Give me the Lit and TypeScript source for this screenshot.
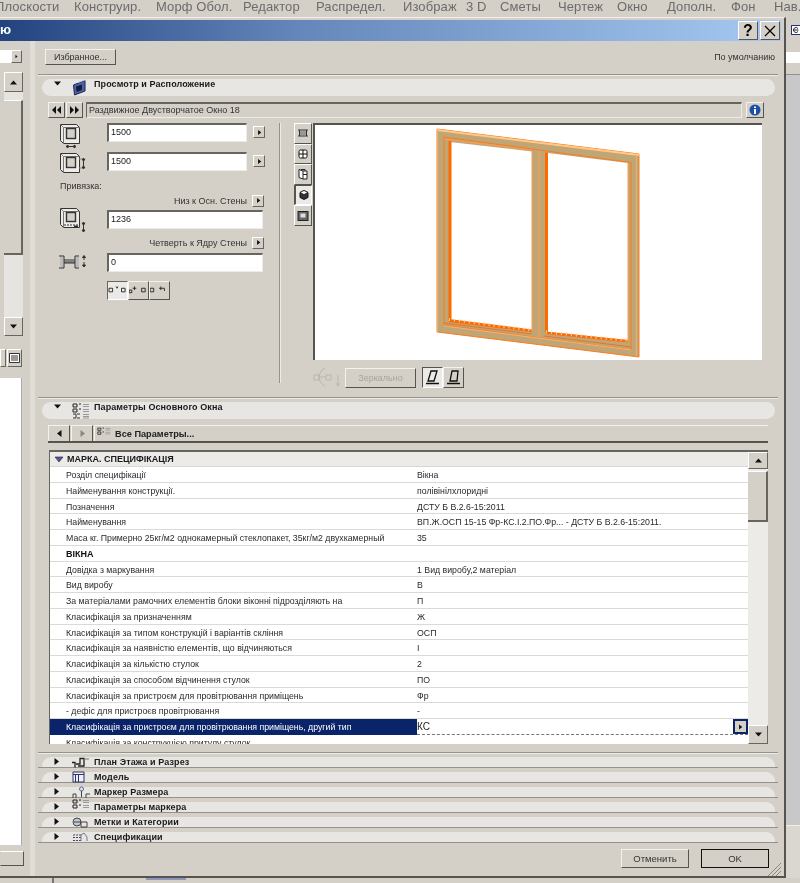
import { LitElement, html, css, svg } from "lit";
import { customElement } from "lit/decorators.js";

const MENU = ["Плоскости", "Конструир.", "Морф Обол.", "Редактор", "Распредел.", "Изображ", "3 D", "Сметы", "Чертеж", "Окно", "Дополн.", "Фон", "Нав."];

const ROWS: [string, string][] = [
  ["Розділ специфікації", "Вікна"],
  ["Найменування конструкції.", "полівінілхлоридні"],
  ["Позначення", "ДСТУ Б В.2.6-15:2011"],
  ["Найменування", "ВП.Ж.ОСП 15-15 Фр-КС.І.2.ПО.Фр... - ДСТУ Б В.2.6-15:2011."],
  ["Маса кг. Примерно 25кг/м2 однокамерный стеклопакет, 35кг/м2 двухкамерный", "35"],
  ["ВІКНА", ""],
  ["Довідка з маркування", "1 Вид виробу,2 матеріал"],
  ["Вид виробу", "В"],
  ["За матеріалами рамочних елементів блоки віконні підрозділяють на", "П"],
  ["Класифікація за призначенням", "Ж"],
  ["Класифікація за типом конструкцій і варіантів скління", "ОСП"],
  ["Класифікація за наявністю елементів, що відчиняються", "І"],
  ["Класифікація за кількістю стулок", "2"],
  ["Класифікація за способом відчинення стулок", "ПО"],
  ["Класифікація за пристроєм для провітрювання приміщень", "Фр"],
  ["- дефіс для пристроєв провітрювання", "-"],
];

const ink = "#333";

// arrows
const tri = (d: string, w = 7, h = 7, fill = "#111") => svg`<svg width=${w} height=${h} viewBox="0 0 7 7"><path d=${d} fill=${fill}/></svg>`;
const triR = tri("M1.5 0L6 3.5L1.5 7Z");
const triL = tri("M5.5 0L1 3.5L5.5 7Z");
const triU = tri("M0 5.5L3.5 1.5L7 5.5Z", 9, 7);
const triD = tri("M0 1.5L3.5 5.5L7 1.5Z", 9, 7);

// window-in-wall box used next to the size fields
const boxIcon = (arrow: "h" | "v" | "a") => svg`<svg class="fi ${arrow}" width="28" height="26" viewBox="0 0 28 26" fill="none" stroke=${ink}>
  <path d="M1.5 1.5H17.5L20.5 4.5V20.5H4.5L1.5 17.5Z" fill="#eeece8"/>
  <path d="M4.5 20.5V4.5H20.5M1.5 1.5L4.5 4.5" stroke="#777"/>
  <rect x="7.5" y="5.5" width="9" height="${arrow === "a" ? 9 : 10}" fill="#d4d0c8" stroke-width="1.4"/>
  ${arrow === "h" ? svg`<path d="M7 23.5H17M7 23.5l2-1.5v3zM17 23.5l-2-1.5v3z" fill="#222"/>` : svg``}
  ${arrow === "v" ? svg`<path d="M24.5 6V17M24.5 6l-1.5 2h3zM24.5 17l-1.5-2h3z" fill="#222"/><path d="M20 7h3M20 16h3" stroke="#888"/>` : svg``}
  ${arrow === "a" ? svg`<path d="M24.5 15V25M24.5 15l-1.5 2h3zM24.5 25l-1.5-2h3z" fill="#222"/><path d="M5 18H20" stroke-dasharray="2 1"/><path d="M15 19h4l-2 2z" fill="#222"/>` : svg``}
</svg>`;

const jambIcon = svg`<svg class="fi" width="28" height="18" viewBox="0 0 28 18" fill="none" stroke=${ink}>
  <path d="M0 3h5v12H0M5 9h11M16 3v12M16 3h4M16 15h4" />
  <path d="M1 4h3v10H1zM17 4h3v10h-3z" fill="#bbb" stroke="none"/>
  <path d="M5 7h11M5 10h11"/>
  <path d="M25 3v4M25 9v5M23.5 4.5L25 2.5l1.5 2zM23.5 12L25 14l1.5-2z" fill="#222"/>
</svg>`;

const anchor = (a: string) => svg`<svg width="19" height="17" viewBox="0 0 21 19" fill="none" stroke="#222">${svg`<path d=${a}/>`}</svg>`;

const tabIcons = [
  svg`<path d="M1 3h10M1 9h10M2.5 3v6M9.5 3v6" stroke="#333" fill="none"/><path d="M3 4h6v4H3z" fill="#999"/>`,
  svg`<rect x="2" y="2" width="8" height="8" rx="1.5" fill="#fff" stroke="#111"/><path d="M6 2v8M2 6h8" stroke="#111"/>`,
  svg`<path d="M2 1.5L6 3v8L2 9.5zM6 3h4v8H6M8 3V1.5H4" fill="#fff" stroke="#222"/><path d="M6 6.5h4"  stroke="#222"/>`,
  svg`<path d="M6 1.5L10 3.5V8.5L6 10.5L2 8.5V3.500Z" fill="#333" stroke="#111"/><path d="M2 3.500L6 5.500L10 3.500L6 1.500Z" fill="#fff" stroke="#111" stroke-width=".7"/>`,
  svg`<rect x="1" y="1.500" width="10" height="9" fill="#666" stroke="#222"/><rect x="3.500" y="3.500" width="5" height="4" fill="#ddd"/>`,
];

const sectionIcon = (kind: string) => {
  switch (kind) {
    case "view":
      return svg`<svg width="15" height="17" viewBox="0 0 15 17"><path d="M1.500 6L13 1.500V12L2.500 16Z" fill="#4a62a8" stroke="#1c2450"/><path d="M4 7.500L10 5.500V11L4.500 13Z" fill="#161c3a"/><path d="M6 3.500L13 1" stroke="#b9c4e8"/></svg>`;
    case "param":
    case "marker":
      return svg`<svg width="18" height="16" viewBox="0 0 18 16" fill="none"><path d="M1 1h4v3H1zM1 6h4v3H1zM7 1h2M7 6h2" stroke="#222"/><path d="M11 1.500h6M11 3.500h6M11 6.500h6M11 8.500h6" stroke="#999"/>${kind === "param" ? svg`<path d="M1 11h3v4H1M5 11h3M5 15h3" stroke="#333"/><path d="M11 11.500h6M11 13.500h6M11 15h6" stroke="#999"/>` : svg``}</svg>`;
    case "plan":
      return svg`<svg width="17" height="11" viewBox="0 0 17 11" fill="none" stroke="#222"><path d="M0 5.500h3v5M4 7h4V1.500h4V9H6" stroke-width="1.300"/><path d="M12 2h5" stroke="#777"/></svg>`;
    case "model":
      return svg`<svg width="13" height="12" viewBox="0 0 13 12" fill="#eef" stroke="#2a3560"><path d="M1 1h11v10H1z"/><path d="M1 3.500h11M6.500 3.500V11M3.500 3.500V11" fill="none"/></svg>`;
    case "dim":
      return svg`<svg width="19" height="13" viewBox="0 0 19 13" fill="none" stroke="#444"><circle cx="9.500" cy="3" r="2" stroke="#5566aa"/><path d="M9.500 5v6M1 8h3M1 8v4M4 8v4M14 8h4M14 8v4" /></svg>`;
    case "label":
      return svg`<svg width="16" height="11" viewBox="0 0 16 11" fill="none" stroke="#444"><circle cx="5" cy="5" r="4" fill="#c4c8d4"/><path d="M9 5h6v5H9zM2 5h7"/></svg>`;
    default:
      return svg`<svg width="16" height="10" viewBox="0 0 16 10" fill="none" stroke="#445"><path d="M1 3h9M1 5.500h9M1 8.500h9" stroke-dasharray="2 1"/><path d="M9 9V3l3-2 3 4v4" stroke="#778"/></svg>`;
  }
};

// 3D preview of the two-part window
const windowDrawing = svg`<svg class="drawing" width="447" height="235" viewBox="315 125 447 235">
  <path d="M437 129L639 154V357L437 332Z" fill="#bfa674" stroke="#ff7a1a"/>
  <path d="M437 129L639 154L639 156L437 131Z" fill="#ffc98a"/>
  <path d="M444 137L631 162.500V350L444 325Z" fill="none" stroke="#ff7a1a"/>
  <path d="M444 139L531 150" stroke="#ff9a50"/>
  <path d="M437.500 130V332M636.500 155V356" stroke="#e9b070"/>
  <path d="M450 142L532 151.500V330.500L450 320Z" fill="#fff"/>
  <path d="M548 153L628 163V340L548 332Z" fill="#fff"/>
  <path d="M448.500 141H451.500V320H448.500Z" fill="#ff6a00"/>
  <path d="M545 152.500H548V333H545Z" fill="#ff6a00"/>
  <path d="M449 319L532 329.500V332L449 322Z" fill="#ff6a00"/>
  <path d="M546 331.500L628 340V342.500L546 334Z" fill="#ff6a00"/>
  <path d="M449 319.500L532 330M546 332L628 340.500" stroke="#ffd0a0" stroke-dasharray="1 4" stroke-width="3" fill="none"/>
  <path d="M532 151V331M539 151V338M628 163V342" stroke="#ff9a50" fill="none"/>
  <path d="M444 326L631 350" stroke="#ffae70"/>
  <path d="M444 323L532 334M544 336L631 347" stroke="#e8732a"/>
</svg>`;

@customElement("app-root")
export class AppRoot extends LitElement {
  static styles = css`
    :host {
      display: block;
      width: 800px;
      height: 883px;
      overflow: hidden;
      background: #d4d0c8;
      color: #333;
      font-family: "Liberation Sans", Arial, sans-serif;
      font-size: 9px;
      filter: blur(0.3px);
    }
    * { box-sizing: border-box; }

    .menu {
      height: 17px;
      display: grid;
      grid-template-columns: 74px 82px 87px 73px 87px 63px 34px 58px 59px 50px 64px 43px 40px;
      font-size: 13px;
      letter-spacing: 0.1px;
      line-height: 13px;
      color: #6c6c6c;
      white-space: nowrap;
      overflow: hidden;
    }
    .menu span:first-child { margin-left: -5px; }

    .desk { display: flex; height: 861px; }
    .dialog {
      width: 786px;
      flex: none;
      border-top: 1px solid #f2f0ec;
      border-right: 2px solid #55544f;
      border-bottom: 2px solid #55544f;
      display: flex;
      flex-direction: column;
    }
    .title {
      height: 21px;
      margin: 2px 3px 0 0;
      flex: none;
      background: linear-gradient(90deg, #23437f 0%, #6486ba 38%, #a6caf2 100%);
      color: #fff;
      font-size: 13px;
      font-weight: bold;
      line-height: 20px;
      display: flex;
      justify-content: space-between;
    }
    .caps { display: flex; gap: 2px; padding: 1px 1px 1px 0; }
    .cap {
      width: 20px;
      background: #d4d0c8;
      border: 1px solid;
      border-color: #fff #555 #555 #fff;
      display: flex;
      align-items: center;
      justify-content: center;
      color: #000;
      font-size: 16px;
      line-height: 1;
    }
    .body { flex: 1; display: flex; min-height: 0; }

    /* left strip of the window behind */
    .side { width: 30px; flex: none; display: flex; flex-direction: column; }
    .side-field { display: flex; height: 13px; margin-top: 9px; width: 22px; }
    .side-field i { width: 11px; background: #fff; }
    .side-field b {
      width: 11px;
      border: 1px solid;
      border-color: #fff #666 #666 #fff;
      display: flex;
      align-items: center;
      justify-content: center;
    }
    .side-scroll {
      margin: 9px 0 0 4px;
      width: 19px;
      height: 264px;
      background: #e6e4e0;
      display: flex;
      flex-direction: column;
    }
    .side-thumb {
      height: 155px;
      margin: 8px 0 62px;
      background: #d4d0c8;
      border-right: 2px solid #66655f;
      border-bottom: 2px solid #66655f;
      border-top: 1px solid #fff;
      flex: none;
    }
    .sbtn {
      background: #d4d0c8;
      border: 1px solid;
      border-color: #fff #66655f #66655f #fff;
      display: flex;
      align-items: center;
      justify-content: center;
      flex: none;
    }
    .h20 { height: 20px; }
    .h19 { height: 19px; }
    .side-tools { display: flex; justify-content: flex-end; width: 22px; margin-top: 13px; gap: 1px; height: 18px; }
    .side-tools .list { width: 15px; }
    .side-tools .stub { width: 6px; }
    .side-list { margin-top: 11px; width: 22px; height: 467px; background: #fff; border-right: 1px solid #aaa; }
    .side-foot { margin-top: 6px; width: 24px; height: 15px; border: 1px solid; border-color: #fff #55544f #55544f #d4d0c8; }
    .split { width: 6px; flex: none; background: #e0ddd7; border-right: 1px solid #d4d0c8; }

    .main { flex: 1; min-width: 0; display: flex; flex-direction: column; position: relative; }
    .favs {
      height: 33px;
      flex: none;
      padding: 8px 8px 0 9px;
      display: flex;
      justify-content: space-between;
    }
    .btn {
      background: #d4d0c8;
      border: 1px solid;
      border-color: #f4f2ee #55544f #55544f #f4f2ee;
      display: flex;
      align-items: center;
      justify-content: center;
    }
    .favs .btn { width: 71px; height: 16px; }
    .favs span { padding-top: 3px; margin-right: 1px; }

    .sep {
      flex: none;
      height: 2px;
      margin: 0 6px 0 2px;
      border-top: 1px solid #94928c;
      border-bottom: 1px solid #ecebe6;
    }
    .pill {
      flex: none;
      height: 17px;
      margin: 3px 9px 0 6px;
      background: #e8e6e2;
      border-radius: 9px;
      display: grid;
      grid-template-columns: 19px 22px 1fr;
      align-items: center;
      font-weight: bold;
      color: #1a1a1a;
      padding-left: 11px;
      letter-spacing: 0.08px;
    }
    .pill .lift { padding-bottom: 6px; line-height: 11px; }
    .pill .ic { display: flex; align-items: center; height: 100%; }

    .nav { flex: none; display: flex; margin: 6px 0 0 12px; height: 16px; gap: 1px; }
    .nav .btn { width: 17px; }
    .nav .field {
      margin-left: 2px;
      width: 656px;
      background: #d4d0c8;
      border-top: 2px solid #66655f;
      border-left: 1px solid #66655f;
      border-right: 1px solid #ecebe6;
      border-bottom: 1px solid #ecebe6;
      padding-left: 2px;
      line-height: 12px;
    }
    .nav .info { margin-left: 3px; width: 18px; }

    .stage { flex: none; display: flex; height: 266px; margin-top: 5px; }
    .form { width: 243px; flex: none; margin-left: 12px; }
    .row { display: flex; align-items: flex-start; height: 19px; }
    .row .fi { width: 28px; flex: none; margin-left: 11px; }
    .row .fi.a { margin-top: -3px; }
    .input {
      height: 19px;
      background: #fff;
      border-top: 2px solid #66655f;
      border-left: 2px solid #66655f;
      border-right: 1px solid #ecebe6;
      border-bottom: 1px solid #ecebe6;
      padding-left: 2px;
      line-height: 15px;
      color: #222;
      flex: none;
    }
    .i-s { width: 140px; margin-left: 20px; }
    .i-l { width: 156px; margin-left: 20px; }
    .mini {
      width: 12px;
      height: 12px;
      margin: 3px 0 0 6px;
      background: #d4d0c8;
      border: 1px solid;
      border-color: #fff #66655f #66655f #fff;
      display: flex;
      align-items: center;
      justify-content: center;
      flex: none;
    }
    .mini svg { width: 5px; height: 5px; }
    .r2 { margin-top: 10px; }
    .caption { margin: 10px 0 0 12px; line-height: 11px; }
    .ref {
      display: flex;
      justify-content: flex-end;
      align-items: center;
      width: 216px;
      height: 13px;
    }
    .ref .mini { margin: 0 0 0 5px; }
    .ref.a { margin-top: 2px; }
    .ref.b { margin-top: 7px; }
    .r3 { margin-top: 3px; }
    .r4 { margin-top: 4px; }
    .anchors { display: flex; margin: 9px 0 0 59px; }
    .anchors .btn { width: 21px; height: 19px; }
    .anchors .on { background: #eceae6; border-color: #66655f #fff #fff #66655f; }
    .vline {
      width: 2px;
      flex: none;
      height: 260px;
      margin-left: -12px;
      border-left: 1px solid #94928c;
      border-right: 1px solid #ecebe6;
    }
    .tabs { flex: none; width: 18px; margin: 0 0 0 13px; display: flex; flex-direction: column; }
    .tab {
      height: 20.600px;
      background: #d4d0c8;
      border: 1px solid;
      border-color: #fff #55544f #55544f #fff;
      display: flex;
      align-items: center;
      justify-content: center;
    }
    .tab.on { background: #eceae6; border-color: #55544f #fff #fff #55544f; border-width: 1px 1px 1px 2px; }
    .right { margin-left: 1px; width: 449px; flex: none; }
    .preview {
      height: 237px;
      background: #fff;
      border-top: 2px solid #55544f;
      border-left: 2px solid #55544f;
      overflow: hidden;
    }
    .drawing { display: block; }
    .mirror { display: flex; align-items: flex-start; margin-top: 6px; }
    .mirror .fl { width: 28px; flex: none; }
    .mirror .btn.dis { width: 71px; height: 20px; margin: 2px 0 0 4px; color: #a6a49e; }
    .mirror .tog { width: 21px; height: 21px; margin-top: 1px; }
    .mirror .tog.first { margin-left: 6px; background: #eceae6; border-color: #55544f #fff #fff #55544f; }

    .params-top { margin-top: 8px; }
    .bar {
      flex: none;
      display: flex;
      height: 18px;
      margin: 6px 16px 0 12px;
      border-bottom: 2px solid #55544f;
      gap: 1px;
    }
    .bar .btn { width: 22px; height: 16px; border-bottom: 0; }
    .bar .all {
      flex: 1;
      justify-content: flex-start;
      font-weight: bold;
      font-size: 9.2px;
      color: #222;
      gap: 4px;
      padding-left: 2px;
      border-right: 0;
    }
    .bar .all svg { width: 14px; height: 13px; }
    .panel {
      flex: none;
      margin: 7px 16px 0 13px;
      height: 294px;
      display: flex;
      border-top: 2px solid #66655f;
      border-left: 1px solid #66655f;
      background: #fff;
      overflow: hidden;
    }
    .table { flex: 1; min-width: 0; overflow: hidden; font-size: 8.75px; color: #2a2a2a; }
    .thead {
      height: 15px;
      background: #ecebe8;
      border-bottom: 1px solid #d9d7d1;
      font-weight: bold;
      font-size: 9px;
      color: #1a1a1a;
      display: flex;
      align-items: center;
      gap: 3px;
      padding-left: 4px;
      line-height: 12px;
    }
    .tr {
      height: 15.780px;
      display: grid;
      grid-template-columns: 367px 1fr;
      border-bottom: 1px solid #dcdad4;
      line-height: 17px;
      white-space: nowrap;
    }
    .tr > div { padding-left: 16px; overflow: hidden; }
    .tr > div + div { padding-left: 0; }
    .tr.group > div { font-weight: bold; color: #111; font-size: 9px; }
    .tr.sel { border-bottom: 0; position: relative; line-height: 16px; }
    .tr.sel > div:first-child { background: #0a246a; color: #fff; }
    .tr.sel > div + div {
      font-size: 10px;
      border-bottom: 1px dashed #777;
      color: #222;
    }
    .tr.sel .pick {
      position: absolute;
      right: 0;
      top: 0;
      width: 15px;
      height: 15px;
      padding: 0;
      border: 2px solid #0a246a;
      background: #d4d0c8;
      display: flex;
      align-items: center;
      justify-content: center;
    }
    .pick svg { width: 5px; height: 6px; }
    .tr.cut { border-bottom: 0; }
    .vscroll {
      width: 20px;
      flex: none;
      background: #ecebe8;
      display: flex;
      flex-direction: column;
    }
    .vscroll .up { height: 17px; }
    .vscroll .thumb {
      height: 51px;
      margin-top: 2px;
      flex: none;
      background: #d4d0c8;
      border-right: 2px solid #66655f;
      border-bottom: 2px solid #66655f;
      border-top: 1px solid #fff;
    }
    .vscroll .dn { height: 19px; margin-top: 203px; }

    .closed-first { margin-top: 8px; margin-bottom: -1px; }
    .closed { flex: none; height: 15px; margin: 0 6px 0 2px; border-bottom: 1px solid #94928c; padding: 4px 3px 0 4px; }
    .closed .cap-pill {
      height: 10px;
      background: #e8e6e2;
      border-radius: 9px 9px 0 0;
      display: grid;
      grid-template-columns: 19px 22px 1fr;
      align-items: center;
      padding-left: 11px;
      font-weight: bold;
      color: #1a1a1a;
      line-height: 10px;
      letter-spacing: 0.1px;
    }
    .closed .ic { display: flex; align-items: center; height: 10px; }

    .foot { flex: none; display: flex; justify-content: flex-end; gap: 12px; margin-top: 6px; padding-right: 15px; position: relative; }
    .foot .btn { width: 68px; height: 19px; font-size: 9.500px; }
    .foot .ok { outline: 1px solid #111; outline-offset: -1px; }
    .grip { position: absolute; right: 2px; bottom: -9px; }

    .strip { flex: 1; display: flex; flex-direction: column; }
    .strip .a { height: 24px; padding: 8px 0 0 5px; overflow: hidden; }
    .strip .b { height: 11px; background: #fff; margin-top: 11px; }
    .strip .c { height: 12px; border-bottom: 1px solid #94928c; }
    .strip .d { height: 751px; background: #c8c8c8; border-bottom: 1px solid #f0eee9; }
    .strip .e { flex: 1; background: #dad7d1; }

    .status { height: 5px; position: relative; overflow: hidden; }
    .status i { position: absolute; left: 52px; top: 0; width: 2px; height: 5px; background: #777; }
    .status b { position: absolute; left: 146px; top: 0; width: 40px; height: 2px; background: #8e96c0; }
  `;

  private section(kind: string, label: string) {
    return html`<div class="closed">
      <div class="cap-pill"><span>${triR}</span><span class="ic">${sectionIcon(kind)}</span><span>${label}</span></div>
    </div>`;
  }

  render() {
    return html`
      <div class="menu">${MENU.map((m) => html`<span>${m}</span>`)}</div>
      <div class="desk">
        <div class="dialog">
          <div class="title">
            <span>ю</span>
            <div class="caps">
              <div class="cap"><b>?</b></div>
              <div class="cap"><svg width="12" height="12" viewBox="0 0 12 12"><path d="M1 1L11 11M11 1L1 11" stroke="#000" stroke-width="1.300"/></svg></div>
            </div>
          </div>
          <div class="body">
            <div class="side">
              <div class="side-field"><i></i><b>${tri("M2 1L5 3.500L2 6Z", 5, 5)}</b></div>
              <div class="side-scroll">
                <div class="sbtn h20">${triU}</div>
                <div class="side-thumb"></div>
                <div class="sbtn h19">${triD}</div>
              </div>
              <div class="side-tools">
                <div class="sbtn stub"></div>
                <div class="sbtn list"><svg width="11" height="10" viewBox="0 0 11 10"><path d="M.5 .5h10v9H.5z" fill="#fff" stroke="#333"/><path d="M2 3h7M2 5h7M2 7h7" stroke="#333"/></svg></div>
              </div>
              <div class="side-list"></div>
              <div class="side-foot"></div>
            </div>
            <div class="split"></div>
            <div class="main">
              <div class="favs">
                <div class="btn">Избранное...</div>
                <span>По умолчанию</span>
              </div>
              <div class="sep"></div>
              <div class="pill">
                <span class="lift">${triD}</span><span class="ic">${sectionIcon("view")}</span><span class="lift">Просмотр и Расположение</span>
              </div>
              <div class="nav">
                <div class="btn"><svg width="11" height="8" viewBox="0 0 11 8"><path d="M5 0L1 4L5 8ZM10 0L6 4L10 8Z" fill="#111"/></svg></div>
                <div class="btn"><svg width="11" height="8" viewBox="0 0 11 8"><path d="M1 0L5 4L1 8ZM6 0L10 4L6 8Z" fill="#111"/></svg></div>
                <div class="field">Раздвижное Двустворчатое Окно 18</div>
                <div class="btn info"><svg width="12" height="12" viewBox="0 0 12 12"><circle cx="6" cy="6" r="5.500" fill="#1c4fa8"/><rect x="5" y="5" width="2" height="5" fill="#fff"/><rect x="5" y="2.500" width="2" height="1.500" fill="#fff"/></svg></div>
              </div>
              <div class="stage">
                <div class="form">
                  <div class="row">${boxIcon("h")}<div class="input i-s">1500</div><div class="mini">${triR}</div></div>
                  <div class="row r2">${boxIcon("v")}<div class="input i-s">1500</div><div class="mini">${triR}</div></div>
                  <div class="caption">Привязка:</div>
                  <div class="ref a"><span>Низ к Осн. Стены</span><div class="mini">${triR}</div></div>
                  <div class="row r3">${boxIcon("a")}<div class="input i-l">1236</div></div>
                  <div class="ref b"><span>Четверть к Ядру Стены</span><div class="mini">${triR}</div></div>
                  <div class="row r4">${jambIcon}<div class="input i-l">0</div></div>
                  <div class="anchors">
                    <div class="btn on">${anchor("M1 7h4v4H1zM15 7h4v4h-4zM9 5l1 2 1-2")}</div>
                    <div class="btn">${anchor("M0 9h3v3H0zM4 7h4M6 5v4M14 7h4v4h-4z")}</div>
                    <div class="btn">${anchor("M0 7h4v4H0zM12 5v4M10 7h6M16 7v3")}</div>
                  </div>
                </div>
                <div class="vline"></div>
                <div class="tabs">
                  ${tabIcons.map((t, i) => html`<div class="tab ${i === 3 ? "on" : ""}"><svg width="12" height="12" viewBox="0 0 12 12">${t}</svg></div>`)}
                </div>
                <div class="right">
                  <div class="preview">${windowDrawing}</div>
                  <div class="mirror">
                    <svg class="fl" width="28" height="22" viewBox="0 0 28 22" fill="none" stroke="#b8b6b0"><path d="M12 2a10 10 0 0 0 0 18"/><path d="M1 9h5v5H1zM13 9h5v5h-5zM6 11h7M25 9v11M23 17l2 3 2-3"/></svg>
                    <div class="btn dis">Зеркально</div>
                    <div class="btn tog first"><svg width="15" height="15" viewBox="0 0 15 15" fill="none" stroke="#111"><path d="M6 1h6l-3 10H3zM1 13.500h13" stroke-width="1.300"/></svg></div>
                    <div class="btn tog"><svg width="15" height="15" viewBox="0 0 15 15" fill="none" stroke="#111"><path d="M6 1h6l-1 10H4zM1 13.500h13" stroke-width="1.300"/></svg></div>
                  </div>
                </div>
              </div>
              <div class="sep params-top"></div>
              <div class="pill">
                <span class="lift">${triD}</span><span class="ic">${sectionIcon("param")}</span><span class="lift">Параметры Основного Окна</span>
              </div>
              <div class="bar">
                <div class="btn">${triL}</div>
                <div class="btn">${tri("M1.500 0L6 3.500L1.500 7Z", 7, 7, "#8a8880")}</div>
                <div class="btn all">${sectionIcon("marker")}<span>Все Параметры...</span></div>
              </div>
              <div class="panel">
                <div class="table">
                  <div class="thead"><svg width="10" height="7" viewBox="0 0 10 7"><path d="M1 1H9L5 6Z" fill="#5a56a8" stroke="#222" stroke-width=".6"/></svg>МАРКА. СПЕЦИФІКАЦІЯ</div>
                  ${ROWS.map(([n, v]) => html`<div class="tr ${n === "ВІКНА" ? "group" : ""}"><div>${n}</div><div>${v}</div></div>`)}
                  <div class="tr sel">
                    <div>Класифікація за пристроєм для провітрювання приміщень, другий тип</div>
                    <div>КС</div>
                    <div class="pick">${triR}</div>
                  </div>
                  <div class="tr cut"><div>Класифікація за конструкцією притулу стулок</div><div></div></div>
                </div>
                <div class="vscroll">
                  <div class="sbtn up">${triU}</div>
                  <div class="thumb"></div>
                  <div class="sbtn dn">${triD}</div>
                </div>
              </div>
              <div class="sep closed-first"></div>
              ${this.section("plan", "План Этажа и Разрез")}
              ${this.section("model", "Модель")}
              ${this.section("dim", "Маркер Размера")}
              ${this.section("marker", "Параметры маркера")}
              ${this.section("label", "Метки и Категории")}
              ${this.section("spec", "Спецификации")}
              <div class="foot">
                <div class="btn">Отменить</div>
                <div class="btn ok">OK</div>
                <svg class="grip" width="15" height="15" viewBox="0 0 15 15" stroke="#8a8880"><path d="M14 1L1 14M14 5L5 14M14 9L9 14"/></svg>
              </div>
            </div>
          </div>
        </div>
        <div class="strip">
          <div class="a"><svg width="10" height="10" viewBox="0 0 10 10"><rect x=".5" y=".5" width="9" height="9" fill="#fff" stroke="#22328a"/><path d="M2.500 5h5M7 6.500a2.500 2.500 0 1 1 0-3" fill="none" stroke="#222"/></svg></div>
          <div class="b"></div>
          <div class="c"></div>
          <div class="d"></div>
          <div class="e"></div>
        </div>
      </div>
      <div class="status"><i></i><b></b></div>
    `;
  }
}
